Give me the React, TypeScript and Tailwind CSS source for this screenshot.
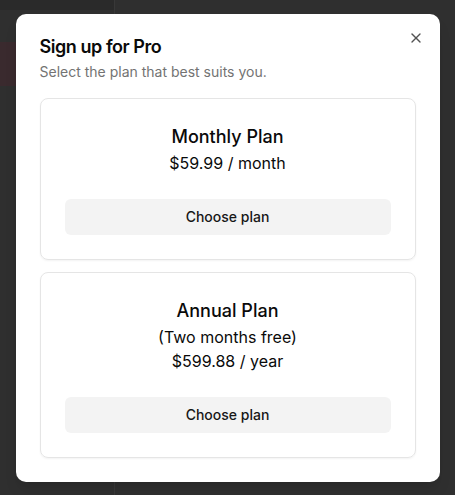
import { X } from 'lucide-react'

const plans = [
  { id: 'monthly', name: 'Monthly Plan', note: null, price: '$59.99 / month' },
  { id: 'annual', name: 'Annual Plan', note: '(Two months free)', price: '$599.88 / year' },
]

export default function App() {
  return (
    <div
      className="relative h-[495px] w-full overflow-hidden bg-[#2f2f2f]"
      style={{ fontFamily: 'Inter, "Noto Sans", sans-serif' }}
    >
      {/* dimmed page behind the dialog */}
      <div className="flex h-full">
        <div className="flex w-[115px] flex-col border-r border-[#383838]">
          <div className="h-[10px] bg-[#2a2a2a]" />
          <div className="mt-[32px] h-[44px] bg-[#3a2a2e]" />
        </div>
        <div className="flex-1" />
      </div>

      {/* dialog */}
      <div className="absolute inset-0 flex items-center justify-center">
        <div className="relative flex w-[424px] flex-col gap-4 rounded-[10px] bg-white p-6 text-[#0a0a0a] shadow-lg">
          <div className="flex flex-col gap-1.5">
            <h2 className="text-lg leading-none font-semibold tracking-tight">Sign up for Pro</h2>
            <p className="text-sm text-[#737373]">Select the plan that best suits you.</p>
          </div>

          <div className="flex flex-col gap-3">
            {plans.map((plan) => (
              <div
                key={plan.id}
                className="flex flex-col items-center rounded-lg border border-[#e5e5e5] p-6 shadow-xs"
              >
                <h3 className="text-lg leading-7 font-medium">{plan.name}</h3>
                {plan.note && <p className="text-base leading-6">{plan.note}</p>}
                <p className="text-base leading-6">{plan.price}</p>
                <button className="mt-6 h-9 w-full rounded-md bg-[#f3f3f3] text-sm font-medium text-[#171717]">
                  Choose plan
                </button>
              </div>
            ))}
          </div>

          <button className="absolute top-4 right-4 text-[#0a0a0a] opacity-70" aria-label="Close">
            <X className="h-4 w-4" />
          </button>
        </div>
      </div>
    </div>
  )
}
